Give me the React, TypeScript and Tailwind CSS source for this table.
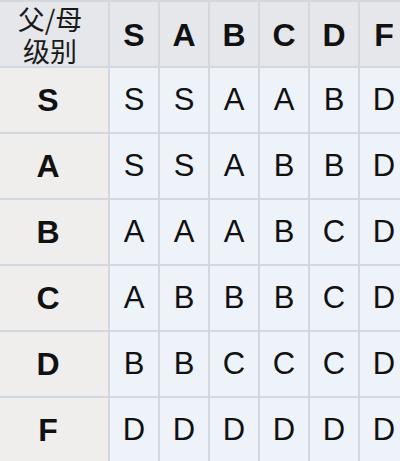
import React from 'react';

const grades = ['S', 'A', 'B', 'C', 'D', 'F'];

// parent grade -> offspring grade per column
const table: Record<string, string[]> = {
  S: ['S', 'S', 'A', 'A', 'B', 'D'],
  A: ['S', 'S', 'A', 'B', 'B', 'D'],
  B: ['A', 'A', 'A', 'B', 'C', 'D'],
  C: ['A', 'B', 'B', 'B', 'C', 'D'],
  D: ['B', 'B', 'C', 'C', 'C', 'D'],
  F: ['D', 'D', 'D', 'D', 'D', 'D'],
};

export default function App() {
  return (
    <div className="w-[400px] h-[461px] overflow-hidden bg-[#d3d8df]">
      <div
        className="grid w-[408px] grid-cols-[108px_repeat(6,48px)] auto-rows-[64px] gap-[2px] pt-[2px] bg-[#d3d8df] text-[#111111]"
        style={{ fontFamily: '"Liberation Sans", Arial, sans-serif' }}
      >
        {/* Header row */}
        <div
          className="flex flex-col items-center justify-center gap-[5px] bg-[#e5e7ea] pr-[8px] text-[27px] leading-none text-[#1a1a1a]"
          style={{ fontFamily: '"Noto Sans CJK SC", sans-serif' }}
        >
          <span>父/母</span>
          <span>级别</span>
        </div>
        {grades.map((g) => (
          <div key={g} className="flex items-center justify-center bg-[#e5e7ea] text-[32px] font-bold pt-[2px]">
            {g}
          </div>
        ))}

        {/* Body rows */}
        {grades.map((row) => (
          <React.Fragment key={row}>
            <div className="flex items-center justify-center bg-[#efeeec] pr-[12px] text-[32px] font-bold">
              {row}
            </div>
            {table[row].map((cell, i) => (
              <div key={i} className="flex items-center justify-center bg-[#eef3fa] text-[31px]">
                {cell}
              </div>
            ))}
          </React.Fragment>
        ))}
      </div>
    </div>
  );
}
